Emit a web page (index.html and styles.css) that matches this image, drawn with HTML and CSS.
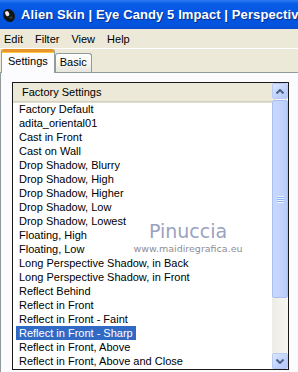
FILE: index.html
```html
<!DOCTYPE html>
<html lang="en">
  <head>
    <meta charset="utf-8">
    <title>Eye Candy 5 Impact</title>
    <link rel="stylesheet" href="styles.css">
  </head>
  <body>
    <div class="window">
      <div class="titlebar">
        <svg class="logo" width="14" height="16" viewBox="0 0 14 16">
          <ellipse cx="7" cy="8.5" rx="5.6" ry="6.8" transform="rotate(-28 7 8.5)" fill="#151515"/>
          <ellipse cx="5.2" cy="6.6" rx="2" ry="2.6" transform="rotate(-28 5.2 6.6)" fill="#e8e8e8"/>
          <ellipse cx="9" cy="10.6" rx="1.6" ry="1.2" fill="#3a3a3a"/>
        </svg>
        <span class="title">Alien Skin | Eye Candy 5 Impact | Perspective</span>
      </div>
      <div class="menubar">
        <span>Edit</span>
        <span>Filter</span>
        <span>View</span>
        <span>Help</span>
      </div>
      <div class="tabs">
        <div class="tab active">Settings</div>
        <div class="tab">Basic</div>
      </div>
      <div class="panel">
        <div class="listbox">
          <div class="list">
            <div class="header">Factory Settings</div>
            <div class="item"><span>Factory Default</span></div>
            <div class="item"><span>adita_oriental01</span></div>
            <div class="item"><span>Cast in Front</span></div>
            <div class="item"><span>Cast on Wall</span></div>
            <div class="item"><span>Drop Shadow, Blurry</span></div>
            <div class="item"><span>Drop Shadow, High</span></div>
            <div class="item"><span>Drop Shadow, Higher</span></div>
            <div class="item"><span>Drop Shadow, Low</span></div>
            <div class="item"><span>Drop Shadow, Lowest</span></div>
            <div class="item"><span>Floating, High</span></div>
            <div class="item"><span>Floating, Low</span></div>
            <div class="item"><span>Long Perspective Shadow, in Back</span></div>
            <div class="item"><span>Long Perspective Shadow, in Front</span></div>
            <div class="item"><span>Reflect Behind</span></div>
            <div class="item"><span>Reflect in Front</span></div>
            <div class="item"><span>Reflect in Front - Faint</span></div>
            <div class="item selected"><span>Reflect in Front - Sharp</span></div>
            <div class="item"><span>Reflect in Front, Above</span></div>
            <div class="item"><span>Reflect in Front, Above and Close</span></div>
            <div class="watermark">
              <div class="wm-name">Pinuccia</div>
              <div class="wm-url">www.maidiregrafica.eu</div>
            </div>
          </div>
          <div class="scrollbar">
            <div class="sbtn">
              <svg width="8" height="5" viewBox="0 0 8 5"><path d="M0.5 4.5 L4 1 L7.5 4.5" fill="none" stroke="#4d6185" stroke-width="2"/></svg>
            </div>
            <div class="thumb">
              <div class="grip"></div>
            </div>
            <div class="track"></div>
            <div class="sbtn">
              <svg width="8" height="5" viewBox="0 0 8 5"><path d="M0.5 0.5 L4 4 L7.5 0.5" fill="none" stroke="#4d6185" stroke-width="2"/></svg>
            </div>
          </div>
        </div>
      </div>
    </div>
  </body>
</html>
```

FILE: styles.css
```css
body{
  margin : 0;
  width : 298px;
  height : 372px;
  overflow : hidden;
  font-family : "Liberation Sans", Arial, sans-serif;
  font-size : 11px;
  color : #000;
  background : #fff;
}
.window{
  display : flex;
  flex-direction : column;
  height : 372px;
}
.titlebar{
  height : 29px;
  flex : none;
  display : flex;
  align-items : center;
  gap : 5px;
  padding-left : 2px;
  background : linear-gradient(#2f7cf3 0%, #0a5de6 12%, #0055e3 50%, #0453dc 90%, #0a4ccc 100%);
  white-space : nowrap;
  overflow : hidden;
}
.logo{
  flex : none;
}
.title{
  color : #fff;
  font-weight : bold;
  font-size : 13px;
  letter-spacing : 0.1px;
  text-shadow : 1px 1px 0 #0a2f8c;
}
.menubar{
  height : 19px;
  flex : none;
  display : flex;
  align-items : center;
  gap : 12px;
  padding-left : 4px;
  background : #ece9d8;
  border-bottom : 1px solid #fff;
}
.tabs{
  height : 23px;
  flex : none;
  display : flex;
  align-items : flex-end;
  padding-left : 1px;
  background : #ece9d8;
  border-bottom : 1px solid #919b9c;
}
.tab{
  height : 18px;
  line-height : 17px;
  padding : 0 4px;
  border : 1px solid #919b9c;
  border-bottom : none;
  border-radius : 3px 3px 0 0;
  background : linear-gradient(#fff, #f3f3ef 60%, #e5e4dd);
}
.tab.active{
  height : 21px;
  line-height : 19px;
  padding : 0 6px;
  background : #fcfcfe;
  border-top : 3px solid #e8962c;
  box-shadow : inset 0 1px 0 #ffc73c;
  margin-bottom : -1px;
  position : relative;
}
.panel{
  flex : 1;
  background : #fcfcfe;
  border-left : 1px solid #919b9c;
  padding : 9px 0 0 11px;
}
.listbox{
  width : 275px;
  height : 286px;
  border : 1px solid #1a1a1a;
  background : #fff;
  display : flex;
}
.list{
  flex : 1;
  position : relative;
  overflow : hidden;
}
.header{
  height : 19px;
  line-height : 19px;
  padding-left : 9px;
  background : #ece9d8;
  border-bottom : 1px solid #d4d0c0;
  box-shadow : 0 1px 0 #e2dfd2;
  box-sizing : border-box;
}
.item{
  height : 14px;
  line-height : 14px;
  padding-left : 3px;
  white-space : nowrap;
}
.item span{
  padding : 0 3px;
  display : inline-block;
}
.item.selected span{
  background : #316ac5;
  color : #fff;
}
.watermark{
  position : absolute;
  left : 113px;
  top : 137px;
  width : 124px;
  text-align : center;
  font-family : "DejaVu Sans", Verdana, sans-serif;
  pointer-events : none;
}
.wm-name{
  font-size : 19px;
  line-height : 22px;
  color : #9aa2bf;
}
.wm-url{
  font-size : 9.5px;
  line-height : 12px;
  margin-top : 1px;
  color : #8e8e98;
}
.scrollbar{
  width : 16px;
  flex : none;
  display : flex;
  flex-direction : column;
  background : linear-gradient(90deg, #eeede5, #f6f5f0);
}
.sbtn{
  height : 16px;
  flex : none;
  box-sizing : border-box;
  border : 1px solid #b7cbf6;
  border-radius : 2px;
  background : linear-gradient(135deg, #dce6fd, #c0d2fb 60%, #b4c8f6);
  display : flex;
  align-items : center;
  justify-content : center;
}
.thumb{
  height : 198px;
  flex : none;
  margin-top : 1px;
  box-sizing : border-box;
  border : 1px solid #a9c0f4;
  border-radius : 2px;
  background : linear-gradient(90deg, #c9d8fc, #c3d4fd 50%, #b9ccf8);
  display : flex;
  align-items : center;
  justify-content : center;
}
.grip{
  width : 7px;
  height : 7px;
  background : repeating-linear-gradient(#eef4fe 0, #eef4fe 1px, #8cb0f8 1px, #8cb0f8 2px);
}
.track{
  flex : 1;
}
```
